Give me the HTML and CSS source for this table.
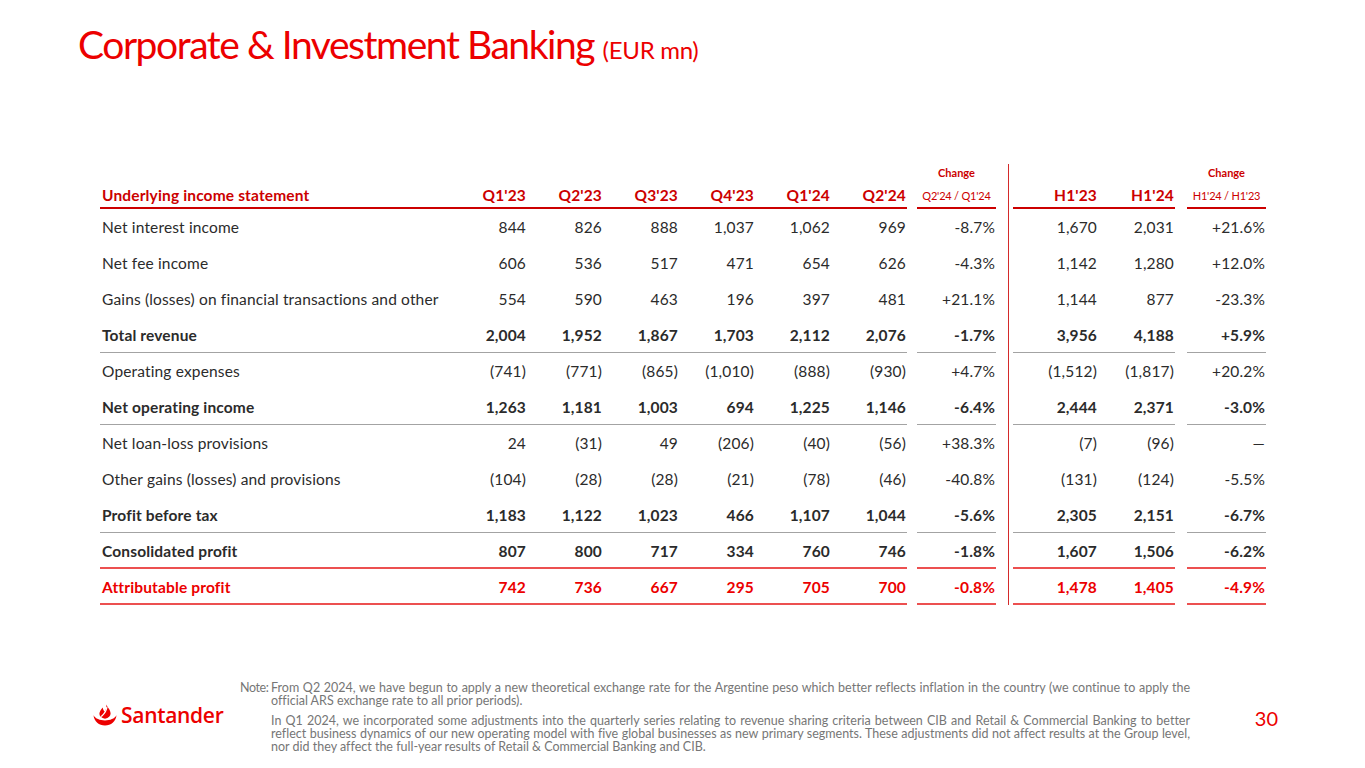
FILE: index.html
```html
<!DOCTYPE html>
<html lang="en">
<head>
<meta charset="utf-8">
<title>Corporate &amp; Investment Banking</title>
<link rel="stylesheet" href="styles.css">
</head>
<body>
<div class="page">
  <h1 class="title">Corporate &amp; Investment Banking <span class="unit">(EUR mn)</span></h1>

  <div class="table">
    <div class="row head">
      <div class="c lbl b">Underlying income statement</div>
      <div class="c n b">Q1'23</div><div class="c n b">Q2'23</div><div class="c n b">Q3'23</div><div class="c n b">Q4'23</div><div class="c n b">Q1'24</div><div class="c n b">Q2'24</div>
      <div class="sp"></div>
      <div class="c ch b"><span class="ch1">Change</span><span class="ch2">Q2'24 / Q1'24</span></div>
      <div class="sp"></div><div class="div"></div><div class="sp"></div>
      <div class="c n b">H1'23</div><div class="c n b">H1'24</div>
      <div class="sp"></div>
      <div class="c ch b"><span class="ch1">Change</span><span class="ch2">H1'24 / H1'23</span></div>
    </div>

    <div class="row">
      <div class="c lbl">Net interest income</div>
      <div class="c n">844</div><div class="c n">826</div><div class="c n">888</div><div class="c n">1,037</div><div class="c n">1,062</div><div class="c n">969</div>
      <div class="sp"></div><div class="c n">-8.7%</div><div class="sp"></div><div class="div"></div><div class="sp"></div>
      <div class="c n">1,670</div><div class="c n">2,031</div><div class="sp"></div><div class="c n">+21.6%</div>
    </div>
    <div class="row">
      <div class="c lbl">Net fee income</div>
      <div class="c n">606</div><div class="c n">536</div><div class="c n">517</div><div class="c n">471</div><div class="c n">654</div><div class="c n">626</div>
      <div class="sp"></div><div class="c n">-4.3%</div><div class="sp"></div><div class="div"></div><div class="sp"></div>
      <div class="c n">1,142</div><div class="c n">1,280</div><div class="sp"></div><div class="c n">+12.0%</div>
    </div>
    <div class="row">
      <div class="c lbl">Gains (losses) on financial transactions and other</div>
      <div class="c n">554</div><div class="c n">590</div><div class="c n">463</div><div class="c n">196</div><div class="c n">397</div><div class="c n">481</div>
      <div class="sp"></div><div class="c n">+21.1%</div><div class="sp"></div><div class="div"></div><div class="sp"></div>
      <div class="c n">1,144</div><div class="c n">877</div><div class="sp"></div><div class="c n">-23.3%</div>
    </div>
    <div class="row bold grey">
      <div class="c lbl b">Total revenue</div>
      <div class="c n b">2,004</div><div class="c n b">1,952</div><div class="c n b">1,867</div><div class="c n b">1,703</div><div class="c n b">2,112</div><div class="c n b">2,076</div>
      <div class="sp"></div><div class="c n b">-1.7%</div><div class="sp"></div><div class="div"></div><div class="sp"></div>
      <div class="c n b">3,956</div><div class="c n b">4,188</div><div class="sp"></div><div class="c n b">+5.9%</div>
    </div>
    <div class="row">
      <div class="c lbl">Operating expenses</div>
      <div class="c n">(741)</div><div class="c n">(771)</div><div class="c n">(865)</div><div class="c n">(1,010)</div><div class="c n">(888)</div><div class="c n">(930)</div>
      <div class="sp"></div><div class="c n">+4.7%</div><div class="sp"></div><div class="div"></div><div class="sp"></div>
      <div class="c n">(1,512)</div><div class="c n">(1,817)</div><div class="sp"></div><div class="c n">+20.2%</div>
    </div>
    <div class="row bold grey">
      <div class="c lbl b">Net operating income</div>
      <div class="c n b">1,263</div><div class="c n b">1,181</div><div class="c n b">1,003</div><div class="c n b">694</div><div class="c n b">1,225</div><div class="c n b">1,146</div>
      <div class="sp"></div><div class="c n b">-6.4%</div><div class="sp"></div><div class="div"></div><div class="sp"></div>
      <div class="c n b">2,444</div><div class="c n b">2,371</div><div class="sp"></div><div class="c n b">-3.0%</div>
    </div>
    <div class="row">
      <div class="c lbl">Net loan-loss provisions</div>
      <div class="c n">24</div><div class="c n">(31)</div><div class="c n">49</div><div class="c n">(206)</div><div class="c n">(40)</div><div class="c n">(56)</div>
      <div class="sp"></div><div class="c n">+38.3%</div><div class="sp"></div><div class="div"></div><div class="sp"></div>
      <div class="c n">(7)</div><div class="c n">(96)</div><div class="sp"></div><div class="c n">&mdash;</div>
    </div>
    <div class="row">
      <div class="c lbl">Other gains (losses) and provisions</div>
      <div class="c n">(104)</div><div class="c n">(28)</div><div class="c n">(28)</div><div class="c n">(21)</div><div class="c n">(78)</div><div class="c n">(46)</div>
      <div class="sp"></div><div class="c n">-40.8%</div><div class="sp"></div><div class="div"></div><div class="sp"></div>
      <div class="c n">(131)</div><div class="c n">(124)</div><div class="sp"></div><div class="c n">-5.5%</div>
    </div>
    <div class="row bold grey">
      <div class="c lbl b">Profit before tax</div>
      <div class="c n b">1,183</div><div class="c n b">1,122</div><div class="c n b">1,023</div><div class="c n b">466</div><div class="c n b">1,107</div><div class="c n b">1,044</div>
      <div class="sp"></div><div class="c n b">-5.6%</div><div class="sp"></div><div class="div"></div><div class="sp"></div>
      <div class="c n b">2,305</div><div class="c n b">2,151</div><div class="sp"></div><div class="c n b">-6.7%</div>
    </div>
    <div class="row bold redline">
      <div class="c lbl b">Consolidated profit</div>
      <div class="c n b">807</div><div class="c n b">800</div><div class="c n b">717</div><div class="c n b">334</div><div class="c n b">760</div><div class="c n b">746</div>
      <div class="sp"></div><div class="c n b">-1.8%</div><div class="sp"></div><div class="div"></div><div class="sp"></div>
      <div class="c n b">1,607</div><div class="c n b">1,506</div><div class="sp"></div><div class="c n b">-6.2%</div>
    </div>
    <div class="row bold redline red">
      <div class="c lbl b">Attributable profit</div>
      <div class="c n b">742</div><div class="c n b">736</div><div class="c n b">667</div><div class="c n b">295</div><div class="c n b">705</div><div class="c n b">700</div>
      <div class="sp"></div><div class="c n b">-0.8%</div><div class="sp"></div><div class="div"></div><div class="sp"></div>
      <div class="c n b">1,478</div><div class="c n b">1,405</div><div class="sp"></div><div class="c n b">-4.9%</div>
    </div>
  </div>

  <footer class="footer">
    <div class="logo">
      <svg class="flame" width="24" height="22" viewBox="0 0 24 22" aria-hidden="true">
        <path fill="#ec0000" d="M0.5 11.2 C1.2 17.5 6 21.5 12 21.5 C18 21.5 22.8 17.5 23.5 11.2 C21.5 14.6 17.2 16.4 12 16.4 C6.8 16.4 2.5 14.6 0.5 11.2 Z"/>
        <path fill="#ec0000" d="M13.2 0.5 C14.6 3.6 17.6 5.6 17.6 9.6 C17.6 12.2 15.6 14 12 14.8 C8.4 14 6.4 12.2 6.4 9.8 C6.4 7.4 8.2 5.6 9.6 3.4 C10 5.4 10.8 6.6 11.8 7.6 C13 5.6 13.8 3.4 13.2 0.5 Z"/>
        <path fill="none" stroke="#fff" stroke-width="1.3" d="M8.2 12.6 C10.4 10.6 13.6 7.8 13.9 3"/>
      </svg>
      <span class="logo-text">Santander</span>
    </div>
    <div class="note">
      <span class="note-lbl">Note:</span>
      <div class="note-body">
        <p>From Q2 2024, we have begun to apply a new theoretical exchange rate for the Argentine peso which better reflects inflation in the country (we continue to apply the official ARS exchange rate to all prior periods).</p>
        <p>In Q1 2024, we incorporated some adjustments into the quarterly series relating to revenue sharing criteria between CIB and Retail &amp; Commercial Banking to better reflect business dynamics of our new operating model with five global businesses as new primary segments. These adjustments did not affect results at the Group level, nor did they affect the full-year results of Retail &amp; Commercial Banking and CIB.</p>
      </div>
    </div>
    <div class="pagenum">30</div>
  </footer>
</div>
</body>
</html>
```

FILE: styles.css
```css
* { box-sizing: border-box; }
html, body { margin: 0; padding: 0; background: #fff; }
body {
  font-family: Lato, "Open Sans", sans-serif;
  color: #2b2b2b;
  font-variant-ligatures: none;
}

.page {
  width: 1365px;
  height: 768px;
  display: flex;
  flex-direction: column;
  overflow: hidden;
}

.title {
  margin: 22px 0 0 78px;
  font-family: Lato, sans-serif;
  font-weight: 400;
  font-size: 39px;
  line-height: 44px;
  letter-spacing: -1.45px;
  color: #ec0000;
  white-space: nowrap;
}
.title .unit { font-size: 24px; letter-spacing: -0.3px; }

.table {
  margin: 92px 0 0 100px;
  display: flex;
  flex-direction: column;
}

.row {
  display: grid;
  grid-template-columns: 351px repeat(6, 76px) 10px 79px 12px 1px 4px 85px 77px 12px 79px;
  height: 36px;
  font-size: 15.5px;
  letter-spacing: 0.15px;
}
.c {
  display: flex;
  align-items: center;
  height: 36px;
  white-space: nowrap;
}
.lbl { padding-left: 2px; }
.n { justify-content: flex-end; padding-right: 1px; }
.div { background: #d42a2a; }

.row.bold { font-weight: 700; }
.row.grey .b { border-bottom: 1px solid #a3a3a3; }
.row.redline .b { border-bottom: 2px solid #ec5050; padding-top: 1px; }
.row.red { color: #ec0000; }

.row.head {
  height: 45px;
  font-weight: 700;
  color: #cc0000;
}
.row.head .c {
  height: 45px;
  align-items: flex-end;
  padding-bottom: 3px;
}
.row.head .b { border-bottom: 2px solid #cc0000; }
.row.head .ch {
  flex-direction: column;
  align-items: center;
  justify-content: flex-end;
  padding-bottom: 4px;
}
.ch1 { font-size: 11px; line-height: 14px; margin-bottom: 9px; letter-spacing: 0; }
.ch2 { font-size: 11px; line-height: 14px; font-weight: 400; letter-spacing: -0.2px; }

.footer {
  margin-top: auto;
  margin-bottom: 15px;
  display: flex;
  align-items: center;
  padding-left: 93px;
  padding-right: 87px;
}
.logo {
  width: 147px;
  flex: none;
  display: flex;
  align-items: center;
  gap: 4px;
  margin-bottom: 4px;
}
.flame { display: block; flex: none; }
.logo-text {
  font-family: "Open Sans", sans-serif;
  font-size: 21px;
  font-weight: 600;
  letter-spacing: -0.3px;
  color: #ec0000;
  line-height: 24px;
}
.note {
  width: 950px;
  flex: none;
  display: grid;
  grid-template-columns: 31px 1fr;
  font-size: 12.5px;
  line-height: 13px;
  color: #767676;
}
.note-lbl { letter-spacing: -0.4px; }
.note-body p {
  margin: 0 0 7px 0;
  text-align: justify;
}
.note-body p:last-child { margin-bottom: 0; }
.pagenum {
  margin-left: auto;
  font-size: 20px;
  color: #ec0000;
  margin-top: 1px;
}
```
